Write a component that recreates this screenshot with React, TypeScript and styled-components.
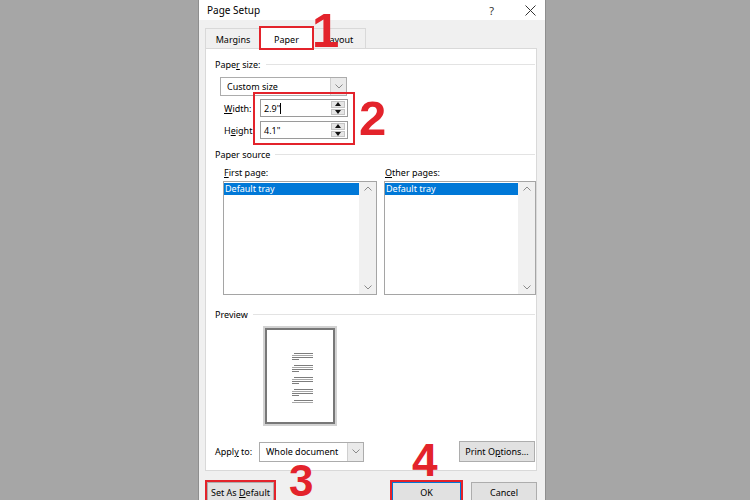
import * as React from 'react';
import styled, { createGlobalStyle, css } from 'styled-components';

const RED = '#e3232b';
const LINE = '#d9d9d9';

const GlobalStyle = createGlobalStyle`
  html, body { margin: 0; padding: 0; }
  body {
    background: #a6a6a6;
    font-family: 'Noto Sans', 'Open Sans', sans-serif;
    font-size: 9px;
    color: #000;
  }
  * { box-sizing: border-box; }
`;

const Screen = styled.div`
  width: 750px;
  height: 500px;
  overflow: hidden;
  display: flex;
  padding-left: 198px;
`;

const Dialog = styled.div`
  position: relative;
  width: 348px;
  height: 500px;
  background: #f0f0f0;
  border-left: 1px solid #8e8e8e;
  border-right: 1px solid #8e8e8e;
  display: flex;
  flex-direction: column;
`;

const TitleBar = styled.div`
  height: 20px;
  flex: none;
  background: #fff;
  display: flex;
  align-items: center;
  padding: 0 9px 0 8px;
`;

const Title = styled.div`
  font-size: 10px;
  flex: 1;
`;

const HelpMark = styled.span`
  font-size: 11px;
  color: #333;
  margin-right: 31px;
`;

const Body = styled.div`
  flex: 1;
  display: flex;
  flex-direction: column;
  padding: 8px 8px 0 6px;
`;

const TabStrip = styled.div`
  height: 20px;
  display: flex;
  align-items: flex-end;
`;

const Tab = styled.div<{ $w: number; $active?: boolean; $marked?: boolean }>`
  width: ${p => p.$w}px;
  height: 20px;
  margin-right: -1px;
  display: flex;
  align-items: center;
  justify-content: center;
  padding-top: 1px;
  background: #f0f0f0;
  border: 1px solid ${LINE};
  border-bottom: none;
  ${p =>
    p.$active &&
    css`
      position: relative;
      z-index: 1;
      height: 22px;
      margin-bottom: -1px;
      background: #fff;
    `}
  ${p =>
    p.$marked &&
    css`
      outline: 2px solid ${RED};
      outline-offset: -1px;
    `}
`;

const Panel = styled.div`
  height: 423px;
  background: #fff;
  border: 1px solid ${LINE};
  display: flex;
  flex-direction: column;
  padding: 9px 1px 0 9px;
`;

const GroupHeader = styled.div<{ $mt?: number }>`
  margin-top: ${p => p.$mt ?? 0}px;
  height: 12px;
  display: flex;
  align-items: center;
  gap: 5px;
  &::after {
    content: '';
    flex: 1;
    height: 1px;
    background: #e3e3e3;
  }
`;

const Select = styled.div<{ $w: number; $h: number; $ml?: number; $mt?: number }>`
  width: ${p => p.$w}px;
  height: ${p => p.$h}px;
  margin-left: ${p => p.$ml ?? 0}px;
  margin-top: ${p => p.$mt ?? 0}px;
  border: 1px solid #acacac;
  display: flex;
  align-items: stretch;
  background: #fff;
`;

const SelectText = styled.div`
  flex: 1;
  display: flex;
  align-items: center;
  padding-left: 6px;
`;

const ChevronBox = styled.div`
  width: 16px;
  background: #eaeaea;
  border-left: 1px solid #cfcfcf;
  display: flex;
  align-items: center;
  justify-content: center;
`;

const FieldRow = styled.div<{ $mt: number }>`
  margin-top: ${p => p.$mt}px;
  display: flex;
  align-items: center;
  padding-left: 9px;
`;

const FieldLabel = styled.div`
  width: 36px;
`;

const SpinInput = styled.div`
  width: 88px;
  height: 18px;
  border: 1px solid #9a9a9a;
  display: flex;
  align-items: center;
  padding: 0 2px 0 3px;
`;

const SpinValue = styled.div`
  flex: 1;
  display: flex;
  align-items: center;
`;

const Caret = styled.span`
  display: inline-block;
  width: 1px;
  height: 11px;
  background: #000;
`;

const SpinButtons = styled.div`
  width: 14px;
  height: 14px;
  display: flex;
  flex-direction: column;
  gap: 1px;
`;

const SpinButton = styled.div`
  flex: 1;
  background: #e6e6e6;
  border: 1px solid #c4c4c4;
  display: flex;
  align-items: center;
  justify-content: center;
`;

const SourceGrid = styled.div`
  margin-top: 7px;
  margin-left: 8px;
  display: grid;
  grid-template-columns: 154px 152px;
  column-gap: 7px;
`;

const SourceColumn = styled.div`
  display: flex;
  flex-direction: column;
  gap: 2px;
`;

const ListLabel = styled.div`
  height: 12px;
  line-height: 12px;
  padding-left: 1px;
`;

const ListBox = styled.div`
  height: 114px;
  border: 1px solid #a5a5a5;
  display: flex;
  background: #fff;
`;

const ListItems = styled.div`
  flex: 1;
  padding-top: 1px;
`;

const ListItem = styled.div<{ $selected?: boolean }>`
  height: 12px;
  line-height: 12px;
  padding-left: 1px;
  ${p =>
    p.$selected &&
    css`
      background: #0078d7;
      color: #fff;
    `}
`;

const ScrollBar = styled.div`
  width: 17px;
  background: #f0f0f0;
  display: flex;
  flex-direction: column;
  justify-content: space-between;
  align-items: center;
  padding: 4px 0;
`;

const PreviewPage = styled.div`
  margin: 8px 0 0 50px;
  width: 70px;
  height: 96px;
  border: 2px solid #787878;
  box-shadow: 0 0 0 2px #d2d2d2;
  background: #fff;
  display: flex;
  align-items: center;
  justify-content: center;
`;

const ApplyRow = styled.div`
  margin-top: 17px;
  display: flex;
  align-items: center;
`;

const ApplyLabel = styled.div`
  width: 44px;
`;

const PushButton = styled.div<{ $w: number; $h?: number; $marked?: boolean; $primary?: boolean }>`
  width: ${p => p.$w}px;
  height: ${p => p.$h ?? 20}px;
  flex: none;
  white-space: nowrap;
  background: #e1e1e1;
  border: 1px solid ${p => (p.$primary ? '#0078d7' : '#adadad')};
  display: flex;
  align-items: center;
  justify-content: center;
  ${p =>
    p.$marked &&
    css`
      outline: 2px solid ${RED};
    `}
`;

const Footer = styled.div`
  flex: 1;
  display: flex;
  align-items: flex-start;
  padding: 11px 0 0 2px;
  gap: 10px;
`;

const Spacer = styled.div`
  flex: 1;
`;

const Callout = styled.div<{ $x: number; $y: number; $size?: number }>`
  position: absolute;
  left: ${p => p.$x}px;
  top: ${p => p.$y}px;
  font-family: 'Liberation Sans', Arial, sans-serif;
  font-weight: 700;
  font-size: ${p => p.$size ?? 49}px;
  line-height: 0.8;
  color: ${RED};
`;

const MarkBox = styled.div`
  position: absolute;
  left: 54px;
  top: 92px;
  width: 102px;
  height: 53px;
  border: 2px solid ${RED};
`;

const Chevron = ({ up }: { up?: boolean }) => (
  <svg width="8" height="5" viewBox="0 0 8 5">
    <polyline
      points={up ? '0.5,4.5 4,1 7.5,4.5' : '0.5,0.5 4,4 7.5,0.5'}
      fill="none"
      stroke="#8a8a8a"
      strokeWidth="1"
    />
  </svg>
);

const Triangle = ({ up }: { up?: boolean }) => (
  <svg width="6" height="4" viewBox="0 0 6 4">
    <polygon points={up ? '0,4 3,0 6,4' : '0,0 6,0 3,4'} fill="#111" />
  </svg>
);

const CloseIcon = () => (
  <svg width="11" height="11" viewBox="0 0 11 11">
    <path d="M0.5 0.5 L10.5 10.5 M10.5 0.5 L0.5 10.5" stroke="#333" strokeWidth="1" />
  </svg>
);

const Spin = ({ children }: { children: React.ReactNode }) => (
  <SpinInput>
    <SpinValue>{children}</SpinValue>
    <SpinButtons>
      <SpinButton>
        <Triangle up />
      </SpinButton>
      <SpinButton>
        <Triangle />
      </SpinButton>
    </SpinButtons>
  </SpinInput>
);

const TrayList = () => (
  <ListBox>
    <ListItems>
      <ListItem $selected>Default tray</ListItem>
    </ListItems>
    <ScrollBar>
      <Chevron up />
      <Chevron />
    </ScrollBar>
  </ListBox>
);

// thumbnail of the page: paragraphs of grey lines
const paragraphs = [350, 362, 374, 386];
const PageLines = () => (
  <svg width="66" height="92" viewBox="265 327 66 92">
    {paragraphs.map(y => (
      <g key={y} stroke="#7d7d7d" strokeWidth="1">
        <line x1="292" y1={y + 0.5} x2="311" y2={y + 0.5} />
        <line x1="290" y1={y + 2.5} x2="311" y2={y + 2.5} stroke="#a8a8a8" />
        <line x1="290" y1={y + 4.5} x2="311" y2={y + 4.5} />
        <line x1="290" y1={y + 6.5} x2="297" y2={y + 6.5} />
      </g>
    ))}
    <g stroke="#7d7d7d" strokeWidth="1">
      <line x1="292" y1="397.5" x2="311" y2="397.5" />
      <line x1="290" y1="399.5" x2="311" y2="399.5" stroke="#a8a8a8" />
    </g>
  </svg>
);

export default function App() {
  return (
    <Screen>
      <GlobalStyle />
      <Dialog>
        <TitleBar>
          <Title>Page Setup</Title>
          <HelpMark>?</HelpMark>
          <CloseIcon />
        </TitleBar>
        <Body>
          <TabStrip>
            <Tab $w={56}>Margins</Tab>
            <Tab $w={53} $active $marked>
              Paper
            </Tab>
            <Tab $w={54}>Layout</Tab>
          </TabStrip>
          <Panel>
            <GroupHeader>
              <span>
                Pape<u>r</u> size:
              </span>
            </GroupHeader>
            <Select $w={127} $h={19} $ml={5} $mt={7}>
              <SelectText>Custom size</SelectText>
              <ChevronBox>
                <Chevron />
              </ChevronBox>
            </Select>
            <FieldRow $mt={3}>
              <FieldLabel>
                <u>W</u>idth:
              </FieldLabel>
              <Spin>
                2.9"
                <Caret />
              </Spin>
            </FieldRow>
            <FieldRow $mt={4}>
              <FieldLabel>
                H<u>e</u>ight:
              </FieldLabel>
              <Spin>4.1"</Spin>
            </FieldRow>
            <GroupHeader $mt={9}>
              <span>Paper source</span>
            </GroupHeader>
            <SourceGrid>
              <SourceColumn>
                <ListLabel>
                  <u>F</u>irst page:
                </ListLabel>
                <TrayList />
              </SourceColumn>
              <SourceColumn>
                <ListLabel>
                  <u>O</u>ther pages:
                </ListLabel>
                <TrayList />
              </SourceColumn>
            </SourceGrid>
            <GroupHeader $mt={13}>
              <span>Preview</span>
            </GroupHeader>
            <PreviewPage>
              <PageLines />
            </PreviewPage>
            <ApplyRow>
              <ApplyLabel>
                Appl<u>y</u> to:
              </ApplyLabel>
              <Select $w={105} $h={20}>
                <SelectText>Whole document</SelectText>
                <ChevronBox>
                  <Chevron />
                </ChevronBox>
              </Select>
              <Spacer />
              <PushButton $w={76} $h={21}>
                <span>
                  Print O<u>p</u>tions...
                </span>
              </PushButton>
            </ApplyRow>
          </Panel>
          <Footer>
            <PushButton $w={67} $marked>
              <span>
                Set As <u>D</u>efault
              </span>
            </PushButton>
            <Spacer />
            <PushButton $w={69} $marked $primary>
              <span>OK</span>
            </PushButton>
            <PushButton $w={66}>
              <span>Cancel</span>
            </PushButton>
          </Footer>
        </Body>
        <MarkBox />
        <Callout $x={113} $y={11}>1</Callout>
        <Callout $x={160} $y={99}>2</Callout>
        <Callout $x={90} $y={463} $size={44}>3</Callout>
        <Callout $x={213} $y={442} $size={46}>4</Callout>
      </Dialog>
    </Screen>
  );
}
